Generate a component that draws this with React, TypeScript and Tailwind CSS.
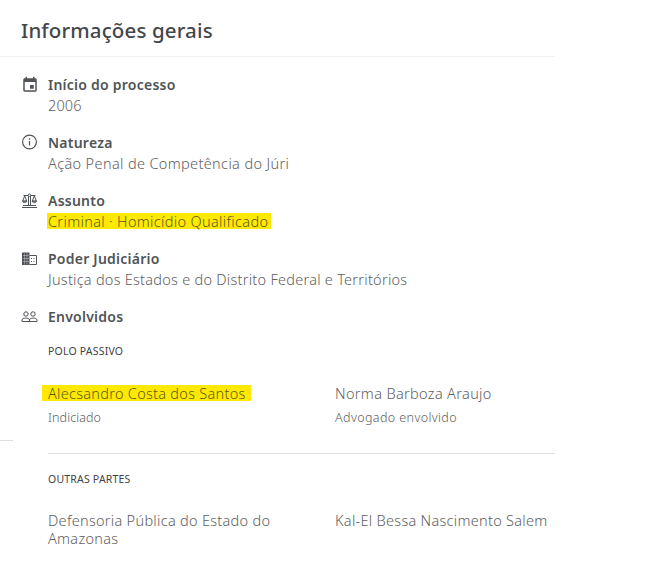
import type { ReactNode } from 'react';
import { MdEvent } from 'react-icons/md';

const InfoIcon = () => (
  <svg width="17" height="16" viewBox="0 0 17 16" fill="none" stroke="currentColor">
    <circle cx="8.500" cy="8" r="6.900" strokeWidth="1.200" />
    <path d="M8.500 7v4.500M8.500 4.300v1.400" strokeWidth="1.200" />
  </svg>
);

const ScalesIcon = () => (
  <svg className="mt-px" width="17" height="16" viewBox="0 0 17 16" fill="none" stroke="currentColor" strokeWidth="1">
    <path d="M1 14.500h15M2 12.500h13M7.500 12.500V3M9.500 12.500V3M2.500 2.500h12" />
    <circle cx="8.500" cy="2.300" r="1.300" fill="white" />
    <path d="M3.700 2.800 1.700 8h4zM13.300 2.800l-2 5.200h4zM1.500 8.200c.3 2 4 2 4.400 0zM11.100 8.200c.3 2 4 2 4.400 0z" />
  </svg>
);

const BuildingIcon = () => (
  <svg className="mt-px" width="17" height="16" viewBox="0 0 17 16" fill="none">
    <path d="M1 1.500h7.500v12.500H1z" fill="currentColor" />
    <path d="M3.500 2.500v11M6 2.500v11M2 4.500H8M2 7.500H8M2 10.500H8" stroke="white" strokeWidth=".6" opacity=".55" />
    <path d="M8.500 4.500h7v9H8.500" stroke="currentColor" strokeWidth="1" />
    <path d="M10 7.500h1M12.500 7.500h1M10 10.500h1M12.500 10.500h1" stroke="currentColor" strokeWidth="1" />
  </svg>
);

const PeopleIcon = () => (
  <svg className="mt-px" width="17" height="16" viewBox="0 0 17 16" fill="none" stroke="currentColor" strokeWidth="1">
    <circle cx="5" cy="5" r="2.200" />
    <circle cx="12" cy="5" r="2.200" />
    <path d="M1 12.500V11c0-2.600 7.500-2.600 7.500 0v1.500zM8.500 12.500H16V11c0-2.600-7.500-2.600-7.500 0z" />
  </svg>
);

function Section({ icon, title, children }: { icon: ReactNode; title: string; children?: ReactNode }) {
  return (
    <section className="flex h-[58px]">
      <div className="w-[27px] pt-[2px] text-[#505458]">{icon}</div>
      <div>
        <h2 className="h-[21px] text-[14px] leading-[21px] font-semibold tracking-[0.24px] text-[#505458]">{title}</h2>
        {children}
      </div>
    </section>
  );
}

const value = 'block w-fit whitespace-nowrap text-[14.5px] leading-[21px] font-light text-[#606060]';

export default function App() {
  return (
    <main className="h-[561px] w-[645px] overflow-hidden bg-white font-['Noto_Sans','Open_Sans',sans-serif]">
      <header className="h-[56px] w-fit pl-[21px] pt-[15px] text-[20.5px] leading-[30px] font-medium text-[#43474b]">
        <h1 className="whitespace-nowrap tracking-[0.13px]">Informações gerais</h1>
      </header>
      <div className="h-px w-[555px] bg-[#f1f1f1]" />
      <div className="flex">
        <aside className="h-[384px] w-[13px] shrink-0 border-b border-[#dedede]" />
        <div className="pl-[8px] pt-[17px]">
          <Section icon={<MdEvent size={18} />} title="Início do processo">
            <span className={value + ' tracking-[0.1px]'}>2006</span>
          </Section>
          <Section icon={<InfoIcon />} title="Natureza">
            <span className={value + ' tracking-[0.36px]'}>Ação Penal de Competência do Júri</span>
          </Section>
          <Section icon={<ScalesIcon />} title="Assunto">
            <div className="-ml-px mt-[2px] flex h-[16px] w-[224px] items-center bg-[#ffe900] pl-px text-[14.5px] leading-[16px] font-light tracking-[0.34px] whitespace-nowrap text-[#5d5a15]">
              Criminal · Homicídio Qualificado
            </div>
          </Section>
          <Section icon={<BuildingIcon />} title="Poder Judiciário">
            <span className={value + ' tracking-[0.26px]'}>Justiça dos Estados e do Distrito Federal e Territórios</span>
          </Section>
          <Section icon={<PeopleIcon />} title="Envolvidos" />
          <div className="-mt-[21px] w-[534px] pl-[27px]">
            <h3 className="text-[10.5px] leading-[16px] tracking-[0.2px] text-[#444]">POLO PASSIVO</h3>
            <div className="mt-[26px] grid h-[69px] grid-cols-[287px_1fr] border-b border-[#dfdfdf]">
              <div>
                <p className="-ml-[6px] flex h-[16px] w-[209px] items-center bg-[#ffe900] pl-[6px] text-[14.5px] leading-[16px] font-light tracking-[0.28px] whitespace-nowrap text-[#5d5a15]">Alecsandro Costa dos Santos</p>
                <p className="mt-[8px] text-[12.500px] leading-[18px] font-light tracking-[0.1px] text-[#606060]">Indiciado</p>
              </div>
              <div>
                <p className="h-[16px] text-[14.5px] leading-[16px] font-light tracking-[0.34px] text-[#606060]">Norma Barboza Araujo</p>
                <p className="mt-[8px] text-[12.500px] leading-[18px] font-light tracking-[0.4px] text-[#606060]">Advogado envolvido</p>
              </div>
            </div>
            <h3 className="mt-[17px] text-[10.5px] leading-[16px] tracking-[0.2px] text-[#444]">OUTRAS PARTES</h3>
            <div className="mt-[24px] grid grid-cols-[287px_1fr] text-[14.5px] leading-[18px] font-light tracking-[0.29px] whitespace-nowrap text-[#606060]">
              <p>Defensoria Pública do Estado do<br />Amazonas</p>
              <p>Kal-El Bessa Nascimento Salem</p>
            </div>
          </div>
        </div>
      </div>
    </main>
  );
}
